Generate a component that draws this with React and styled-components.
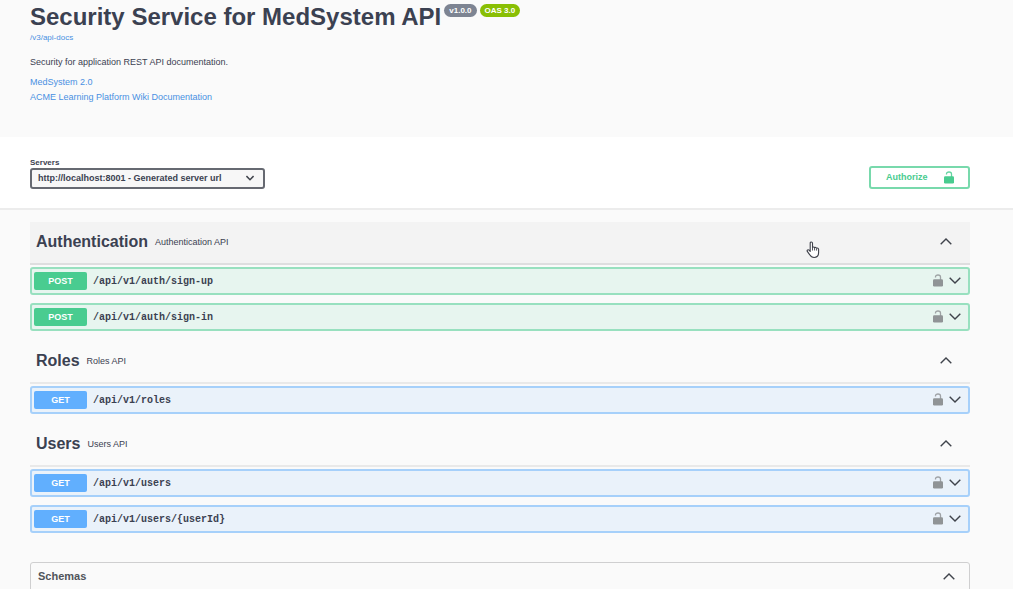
import React from "react";
import styled, { createGlobalStyle } from "styled-components";

const GlobalStyle = createGlobalStyle`
  * { box-sizing: border-box; }
  body {
    margin: 0;
    background: #fafafa;
    color: #3b4151;
    font-family: "Liberation Sans", Arial, sans-serif;
  }
`;

const methodColors = {
  POST: { solid: "#49cc90", border: "#98e0bf", fill: "#e7f5ef" },
  GET: { solid: "#61affe", border: "#a6d0fa", fill: "#eaf2fa" },
};

const Page = styled.main`
  width: 100%;
  overflow-x: hidden;
`;

const Container = styled.div`
  padding: 0 43px 0 30px;
`;

const Info = styled.header`
  min-height: 137px;
  padding-top: 3px;
`;

const TitleRow = styled.div`
  display: flex;
  align-items: flex-start;
  gap: 3px;
`;

const Title = styled.h1`
  margin: 0;
  font-size: 24px;
  line-height: 28px;
  white-space: nowrap;
`;

const Version = styled.span`
  margin-top: 1px;
  padding: 0 5px;
  border-radius: 7px;
  background: ${(p) => (p.$green ? "#89bf04" : "#7d8492")};
  color: #fff;
  font-size: 8px;
  font-weight: 700;
  line-height: 13px;
  white-space: nowrap;
`;

const Link = styled.a`
  display: block;
  width: fit-content;
  color: #4990e2;
  font-size: ${(p) => (p.$small ? "8px" : "9px")};
  line-height: ${(p) => (p.$small ? "14px" : "15px")};
  text-decoration: none;
`;

const Description = styled.p`
  margin: 10px 0 6px;
  font-size: 9px;
  line-height: 14px;
`;

const SchemeBar = styled.section`
  background: #fff;
  border-bottom: 2px solid #ececec;
`;

const SchemeInner = styled(Container)`
  display: flex;
  align-items: center;
  justify-content: space-between;
  height: 71px;
  padding-top: 9px;
`;

const ServerField = styled.div`
  display: flex;
  flex-direction: column;
`;

const ServerLabel = styled.label`
  font-size: 8px;
  font-weight: 700;
  line-height: 10px;
`;

const SelectBox = styled.div`
  position: relative;
  display: flex;
  width: 235px;
  margin-bottom: 8px;

  svg {
    position: absolute;
    right: 11px;
    top: 7px;
    pointer-events: none;
  }
`;

const Select = styled.select`
  width: 100%;
  height: 21px;
  padding: 0 24px 0 6px;
  border: 2px solid #666971;
  border-radius: 3px;
  background: #f7f7f7;
  color: #3b4151;
  font-family: inherit;
  font-size: 9px;
  font-weight: 700;
  appearance: none;
`;

const AuthorizeButton = styled.button`
  display: flex;
  align-items: center;
  justify-content: space-between;
  width: 101px;
  height: 23px;
  padding: 0 14px 0 15px;
  border: 2px solid #78d9ac;
  border-radius: 3px;
  background: transparent;
  color: #49cc90;
  font-family: inherit;
  font-size: 9px;
  font-weight: 700;
`;

const Sections = styled(Container)`
  padding-top: 12px;
`;

const TagSection = styled.section`
  padding-bottom: 2px;
`;

const TagHeader = styled.button`
  display: flex;
  align-items: center;
  width: 100%;
  height: 43px;
  margin-bottom: 2px;
  padding: 0 18px 2px 6px;
  border: 0;
  border-bottom: 2px solid ${(p) => (p.$hovered ? "#dededf" : "#e9e9e9")};
  background: ${(p) => (p.$hovered ? "#f3f3f3" : "transparent")};
  color: inherit;
  font-family: inherit;
  text-align: left;
`;

const TagName = styled.span`
  font-size: 16px;
  font-weight: 700;
  line-height: 20px;
`;

const TagDescription = styled.span`
  flex: 1;
  margin-left: 7px;
  font-size: 9px;
  line-height: 20px;
`;

const Operation = styled.button`
  display: flex;
  align-items: center;
  width: 100%;
  height: 28px;
  margin: 0 0 8px;
  padding: 0 7px 0 2px;
  border: 2px solid ${(p) => methodColors[p.$method].border};
  border-radius: 3px;
  background: ${(p) => methodColors[p.$method].fill};
  color: inherit;
  text-align: left;
`;

const Method = styled.span`
  width: 53px;
  border-radius: 2px;
  background: ${(p) => methodColors[p.$method].solid};
  color: #fff;
  font-family: "Liberation Sans", Arial, sans-serif;
  font-size: 9px;
  font-weight: 700;
  line-height: 18px;
  text-align: center;
`;

const Path = styled.span`
  flex: 1;
  margin-left: 6px;
  padding-top: 2px;
  font-family: "Liberation Mono", monospace;
  font-size: 10px;
  font-weight: 700;
  line-height: 20px;
`;

const OperationIcons = styled.span`
  display: flex;
  align-items: center;
  gap: 6px;
  padding-bottom: 2px;
  color: #909496;
`;

const Schemas = styled.section`
  min-height: 60px;
  margin-top: 19px;
  border: 1px solid #cfcfd0;
  border-radius: 3px;
`;

const SchemasHeader = styled.button`
  display: flex;
  align-items: center;
  justify-content: space-between;
  width: 100%;
  height: 28px;
  padding: 0 14px 2px 7px;
  border: 0;
  background: transparent;
  color: #50545b;
  font-family: inherit;
  font-size: 11px;
  font-weight: 700;
`;

const Pointer = styled.svg`
  position: absolute;
  left: 806px;
  top: 241px;
  pointer-events: none;
`;

function Chevron({ up, small }) {
  return (
    <svg width={small ? 8 : 12} height={small ? 6 : 7} viewBox="0 0 12 7" fill="none" aria-hidden="true">
      <path
        d={up ? "M.7 6.300 6 1 11.300 6.300" : "M.7.7 6 6 11.300.7"}
        stroke="#3f434b"
        strokeWidth={small ? 2.2 : 1.4}
      />
    </svg>
  );
}

function OpenLock() {
  return (
    <svg width="10" height="13" viewBox="0 0 10 13" fill="none" aria-hidden="true">
      <path d="M2.500 3.600V3C2.500 1.700 3.500 1 5 1s2.500.7 2.500 2.100V6" stroke="currentColor" strokeWidth="1.300" opacity=".85" />
      <rect y="5.200" width="10" height="7.300" rx="1.200" fill="currentColor" />
    </svg>
  );
}

const tags = [
  {
    name: "Authentication",
    description: "Authentication API",
    hovered: true,
    operations: [
      ["POST", "/api/v1/auth/sign-up"],
      ["POST", "/api/v1/auth/sign-in"],
    ],
  },
  { name: "Roles", description: "Roles API", operations: [["GET", "/api/v1/roles"]] },
  {
    name: "Users",
    description: "Users API",
    operations: [
      ["GET", "/api/v1/users"],
      ["GET", "/api/v1/users/{userId}"],
    ],
  },
];

export default function App() {
  return (
    <Page>
      <GlobalStyle />
      <Container>
        <Info>
          <TitleRow>
            <Title>Security Service for MedSystem API</Title>
            <Version>v1.0.0</Version>
            <Version $green>OAS 3.0</Version>
          </TitleRow>
          <Link $small href="/v3/api-docs">/v3/api-docs</Link>
          <Description>Security for application REST API documentation.</Description>
          <Link href="#terms">MedSystem 2.0</Link>
          <Link href="#wiki">ACME Learning Platform Wiki Documentation</Link>
        </Info>
      </Container>
      <SchemeBar>
        <SchemeInner>
          <ServerField>
            <ServerLabel htmlFor="servers">Servers</ServerLabel>
            <SelectBox>
              <Select id="servers">
                <option>http://localhost:8001 - Generated server url</option>
              </Select>
              <Chevron small />
            </SelectBox>
          </ServerField>
          <AuthorizeButton type="button">
            Authorize
            <OpenLock />
          </AuthorizeButton>
        </SchemeInner>
      </SchemeBar>
      <Sections>
        {tags.map((tag) => (
          <TagSection key={tag.name}>
            <TagHeader type="button" $hovered={tag.hovered}>
              <TagName>{tag.name}</TagName>
              <TagDescription>{tag.description}</TagDescription>
              <Chevron up />
            </TagHeader>
            {tag.operations.map(([method, path]) => (
              <Operation type="button" key={path} $method={method}>
                <Method $method={method}>{method}</Method>
                <Path>{path}</Path>
                <OperationIcons>
                  <OpenLock />
                  <Chevron />
                </OperationIcons>
              </Operation>
            ))}
          </TagSection>
        ))}
        <Schemas>
          <SchemasHeader type="button">
            Schemas
            <Chevron up />
          </SchemasHeader>
        </Schemas>
      </Sections>
      <Pointer width="14" height="18" viewBox="0 0 14 18" aria-hidden="true">
        <path
          d="M4.200 10.500V2.200c0-1.700 2.300-1.700 2.300 0v4.200c.5-.6 1.800-.5 2.100.3.600-.5 1.800-.3 2 .5.800-.4 2 0 2 1.100v3.200c0 3.300-1.700 5-4.500 5-2.300 0-3.400-1-4.300-2.700L1.300 10.400c-.7-1.300.9-2.200 1.800-1.200z"
          fill="#fff"
          stroke="#3f414a"
          strokeWidth="1.1"
          strokeLinejoin="round"
        />
        <path d="M6.500 6.500v3M8.600 6.900v2.600M10.600 7.400v2.200" stroke="#3f414a" strokeWidth="0.9" />
      </Pointer>
    </Page>
  );
}
